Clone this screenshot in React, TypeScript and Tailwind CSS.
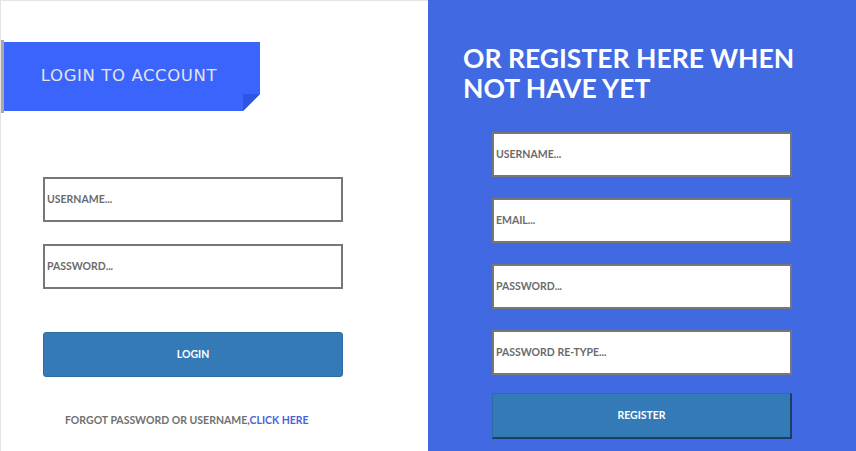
import React from 'react';

const font = { fontFamily: 'Lato, "Open Sans", sans-serif' };

function Field({ placeholder }: { placeholder: string }) {
  return (
    <div className="h-[45px] w-[300px] bg-white border-2 border-[#777777] flex items-center px-[2px]">
      <span className="text-[10.5px] font-bold text-[#6b6b6b]">{placeholder}</span>
    </div>
  );
}

// Ribbon header with folded corner
function Banner() {
  return (
    <div className="flex items-stretch mt-[39px] h-[73px]">
      <div className="w-[3px] bg-[#a9a9a9]" />
      <div className="relative mt-[2px] h-[69px] w-[256px]">
        <div className="h-full w-full bg-[#3a64fb] flex items-center justify-center [clip-path:polygon(0_0,100%_0,100%_calc(100%-17px),calc(100%-17px)_100%,0_100%)]">
          <span
            className="text-[16.5px] text-[#e4e4ea] tracking-[0.6px] pr-[6px] pb-[1px]"
            style={{ fontFamily: '"DejaVu Sans", sans-serif' }}
          >
            LOGIN TO ACCOUNT
          </span>
        </div>
        <div className="absolute right-0 bottom-0 w-[17px] h-[17px] bg-[#2b55e4] [clip-path:polygon(0_0,100%_0,0_100%)]" />
      </div>
    </div>
  );
}

export default function App() {
  return (
    <div className="flex h-[451px] w-[856px] overflow-hidden" style={font}>
      {/* Login side */}
      <div className="w-[428px] h-full bg-white border-l border-t border-[#e4e4e4] flex flex-col">
        <Banner />
        <div className="pl-[42px] mt-[64px] flex flex-col gap-[22px]">
          <Field placeholder="USERNAME..." />
          <Field placeholder="PASSWORD..." />
        </div>
        <div className="pl-[42px] mt-[43px]">
          <button className="h-[45px] w-[300px] rounded-[3px] bg-[#337ab7] border border-[#2e6da4] text-white text-[10.5px] font-bold">
            LOGIN
          </button>
        </div>
        <p className="mt-[36px] pl-[64px] text-[10.5px] font-bold text-[#707070]">
          FORGOT PASSWORD OR USERNAME,<span className="text-[#4b62dc]">CLICK HERE</span>
        </p>
      </div>

      {/* Register side */}
      <div className="flex-1 h-full bg-[#4169e1] flex flex-col">
        <h2 className="mt-[43px] pl-[35px] text-[26.5px] leading-[30px] font-bold text-white">
          OR REGISTER HERE WHEN
          <br />
          NOT HAVE YET
        </h2>
        <div className="pl-[64px] mt-[29px] flex flex-col gap-[21px]">
          <Field placeholder="USERNAME..." />
          <Field placeholder="EMAIL..." />
          <Field placeholder="PASSWORD..." />
          <Field placeholder="PASSWORD RE-TYPE..." />
        </div>
        <div className="pl-[64px] mt-[18px]">
          <button className="h-[46px] w-[300px] bg-[#337ab7] border border-[#2e6da4] border-r-2 border-b-2 border-r-[#1b3e66] border-b-[#1b3e66] text-white text-[10.5px] font-bold">
            REGISTER
          </button>
        </div>
      </div>
    </div>
  );
}
